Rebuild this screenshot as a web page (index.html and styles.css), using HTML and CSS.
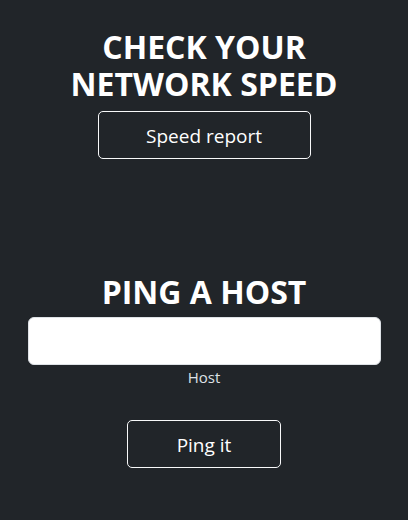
FILE: index.html
```html
<!DOCTYPE html>
<html lang="en">
<head>
<meta charset="utf-8">
<title>Network tools</title>
<link rel="stylesheet" href="styles.css">
</head>
<body>
<main class="page">
  <section class="block block-speed">
    <h1 class="title">CHECK YOUR<br>NETWORK SPEED</h1>
    <button class="btn btn-speed" type="button">Speed report</button>
  </section>
  <section class="block block-ping">
    <h1 class="title">PING A HOST</h1>
    <input class="host-input" type="text" aria-label="Host">
    <div class="hint">Host</div>
    <button class="btn btn-ping" type="button">Ping it</button>
  </section>
</main>
</body>
</html>
```
FILE: styles.css
```css
html, body {
  margin: 0;
  padding: 0;
  background: #212529;
  height: 100%;
}
body {
  font-family: "Open Sans", "Noto Sans", sans-serif;
  color: #ffffff;
}
.page {
  display: flex;
  flex-direction: column;
  align-items: center;
  padding: 0 27px;
}
.block {
  display: flex;
  flex-direction: column;
  align-items: center;
  width: 100%;
}
.block-speed {
  padding-top: 28px;
}
.block-ping {
  padding-top: 114px;
}
.title {
  margin: 0;
  font-size: 32px;
  font-weight: 700;
  line-height: 37px;
  text-align: center;
  letter-spacing: 0;
}
.btn {
  box-sizing: border-box;
  height: 48px;
  background: transparent;
  color: #ffffff;
  border: 1px solid #f8f9fa;
  border-radius: 5px;
  font-family: inherit;
  font-size: 19px;
  padding: 2px 16px 0;
}
.btn-speed {
  width: 213px;
  margin-top: 9px;
}
.btn-ping {
  width: 154px;
  margin-top: 32px;
}
.host-input {
  box-sizing: border-box;
  width: 353px;
  height: 48px;
  margin-top: 7px;
  background: #ffffff;
  border: 1px solid #dee2e6;
  border-radius: 6px;
  font-family: inherit;
  font-size: 20px;
  padding: 0 16px;
}
.hint {
  margin-top: 1px;
  font-size: 15px;
  line-height: 22px;
  color: #dee2e6;
}
```
